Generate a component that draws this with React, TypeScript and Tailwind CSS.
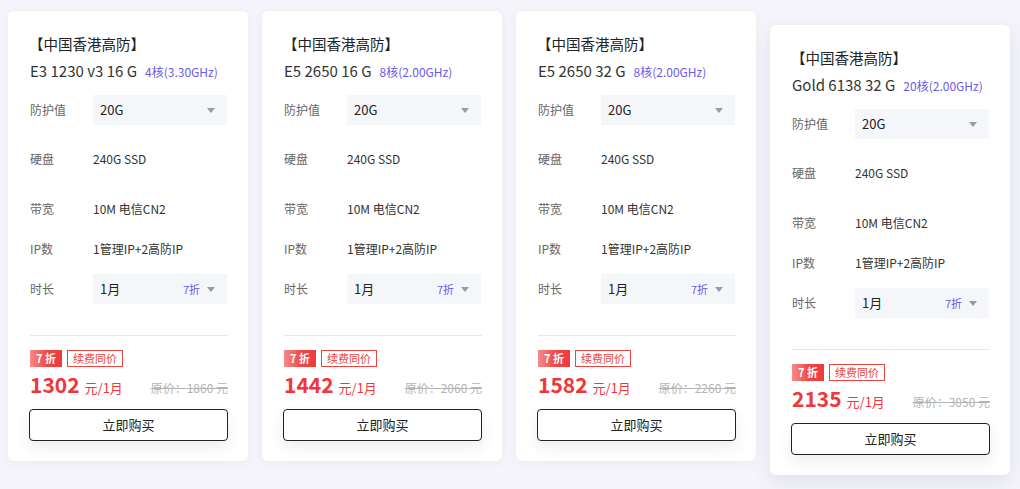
import React from 'react';

type Plan = {
  name: string;
  cores: string;
  price: string;
  original: string;
  active?: boolean;
};

const plans: Plan[] = [
  { name: 'E3 1230 v3 16 G', cores: '4核(3.30GHz)', price: '1302', original: '1860' },
  { name: 'E5 2650 16 G', cores: '8核(2.00GHz)', price: '1442', original: '2060' },
  { name: 'E5 2650 32 G', cores: '8核(2.00GHz)', price: '1582', original: '2260' },
  { name: 'Gold 6138 32 G', cores: '20核(2.00GHz)', price: '2135', original: '3050', active: true },
];

const Caret: React.FC = () => (
  <svg width="8" height="5" viewBox="0 0 8 5" className="shrink-0">
    <path d="M0 0h8L4 5z" fill="#9a9aa3" />
  </svg>
);

const Select: React.FC<{ value: string; tag?: string }> = ({ value, tag }) => (
  <div className="flex h-[30px] w-[134px] items-center bg-[#f5f6fa] pl-[7px] pr-[12px]">
    <span className="flex-1 text-[13px] text-[#222]">{value}</span>
    {tag && <span className="mr-[7px] text-[11px] text-[#6b5ce7]">{tag}</span>}
    <Caret />
  </div>
);

const Row: React.FC<{ label: string; className?: string; children: React.ReactNode }> = ({ label, className = '', children }) => (
  <div className={`flex h-[30px] items-center ${className}`}>
    <span className="w-[63px] text-[12px] text-[#666]">{label}</span>
    {children}
  </div>
);

const PlanCard: React.FC<{ plan: Plan }> = ({ plan }) => (
  <div
    className={`w-[240px] shrink-0 rounded-[6px] bg-white pt-[23px] pb-[20px] pl-[22px] pr-[20px] ${
      plan.active ? 'mt-[14px] shadow-[0_6px_18px_rgba(90,90,140,0.12)]' : 'shadow-[0_2px_8px_rgba(90,90,140,0.06)]'
    }`}
  >
    <div className="-ml-[1px] text-[14.5px] leading-[20px] text-[#222]">【中国香港高防】</div>
    <div className="mt-[6px] flex items-baseline leading-[22px]">
      <span className="text-[15px] text-[#333]">{plan.name}</span>
      <span className="ml-[8px] text-[12px] text-[#6b5ce7]">{plan.cores}</span>
    </div>

    <Row label="防护值" className="mt-[12px]">
      <Select value="20G" />
    </Row>
    <Row label="硬盘" className="mt-[19px]">
      <span className="text-[12px] text-[#333]">240G SSD</span>
    </Row>
    <Row label="带宽" className="mt-[20px]">
      <span className="text-[12px] text-[#333]">10M 电信CN2</span>
    </Row>
    <Row label="IP数" className="mt-[10px]">
      <span className="text-[12px] text-[#333]">1管理IP+2高防IP</span>
    </Row>
    <Row label="时长" className="mt-[10px]">
      <Select value="1月" tag="7折" />
    </Row>

    <div className="mt-[31px] border-t border-[#e6e6ea]" />

    <div className="mt-[14px] flex items-center gap-[5px]">
      <span className="flex h-[17px] w-[32px] items-center bg-gradient-to-r from-[#f58a8a] via-[#f04848] to-[#ec3b3b] pl-[6px] text-[11px] font-bold text-white">
        7 折
      </span>
      <span className="flex h-[17px] items-center border border-[#e8453c] px-[5px] text-[11px] text-[#e8453c]">续费同价</span>
    </div>

    <div className="mt-[3px] flex h-[28px] items-baseline leading-[28px]">
      <span className="text-[21px] font-bold text-[#f0353b]">{plan.price}</span>
      <span className="ml-[5px] text-[13px] text-[#f0353b]">元/1月</span>
      <span className="ml-auto text-[12px] text-[#b4b4b4] line-through">原价：{plan.original} 元</span>
    </div>

    <button className="mt-[11px] h-[32px] w-[199px] -ml-[1px] rounded-[4px] border border-[#222] bg-white text-[13px] text-[#222] shadow-[0_6px_14px_rgba(80,80,120,0.10)]">
      立即购买
    </button>
  </div>
);

export default function App() {
  return (
    <div
      className="flex h-[489px] w-[1020px] items-start gap-[14px] bg-[#f4f4fa] pl-[8px] pt-[11px]"
      style={{ fontFamily: '"Noto Sans CJK SC", "Noto Sans", sans-serif' }}
    >
      {plans.map(p => (
        <PlanCard key={p.name} plan={p} />
      ))}
    </div>
  );
}
